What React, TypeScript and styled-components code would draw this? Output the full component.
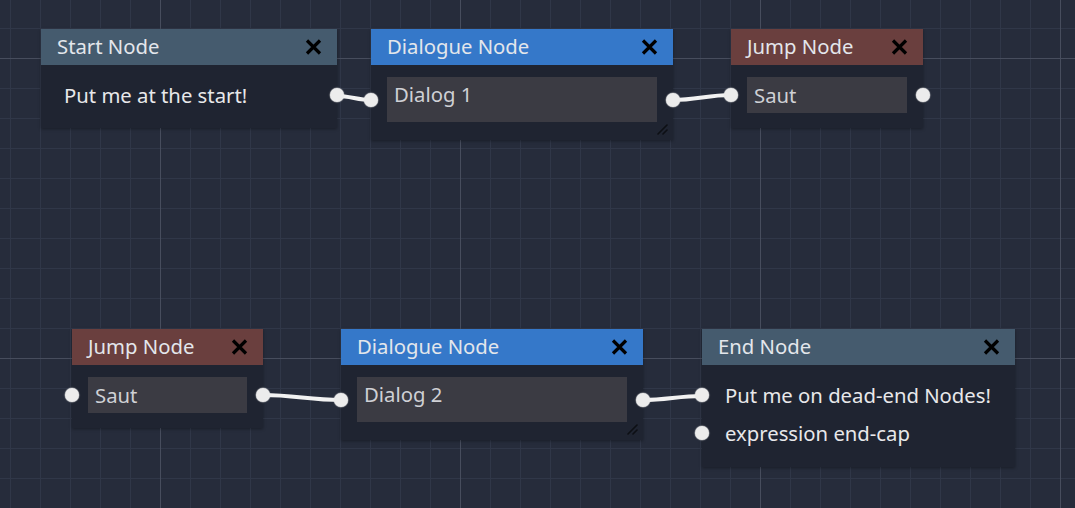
import React from "react";
import styled, { createGlobalStyle } from "styled-components";

const Global = createGlobalStyle`
  html, body { margin: 0; padding: 0; background: #262c3b; overflow: hidden; }
  * { box-sizing: border-box; }
`;

const Canvas = styled.div`
  position: relative;
  width: 1075px;
  height: 508px;
  overflow: hidden;
  font-family: "Noto Sans", "Open Sans", sans-serif;
  font-size: 20.3px;
  background-color: #262c3b;
  background-image:
    linear-gradient(to right, #474d5d 1px, transparent 1px),
    linear-gradient(to bottom, #474d5d 1px, transparent 1px),
    linear-gradient(to right, #303748 1px, transparent 1px),
    linear-gradient(to bottom, #303748 1px, transparent 1px);
  background-size: 300px 300px, 300px 300px, 30px 30px, 30px 30px;
  background-position: 160px 58px, 160px 58px, 10px 28px, 10px 28px;
`;

const Wires = styled.svg`
  position: absolute;
  inset: 0;
  width: 1075px;
  height: 508px;
  pointer-events: none;
`;

const GraphNode = styled.div<{ $x: number; $y: number; $w: number }>`
  position: absolute;
  left: ${(p) => p.$x}px;
  top: ${(p) => p.$y}px;
  width: ${(p) => p.$w}px;
  background: #1f2431;
  box-shadow: 0 1px 3px rgba(0, 0, 0, 0.35);
`;

const TitleBar = styled.div<{ $color: string }>`
  display: flex;
  align-items: center;
  justify-content: space-between;
  height: 36px;
  padding: 0 15px 2px 16px;
  background: ${(p) => p.$color};
  color: #e3e6eb;
  line-height: 27px;
`;

const CloseButton = styled.svg`
  width: 17px;
  height: 16px;
  display: block;
  margin-top: 2px;
`;

const Body = styled.div<{ $pb: number }>`
  display: flex;
  flex-direction: column;
  gap: 2px;
  padding: 12px 16px ${(p) => p.$pb}px;
`;

const Slot = styled.div`
  position: relative;
  display: flex;
  align-items: stretch;
  min-height: 36px;
`;

const Port = styled.span<{ $side: "left" | "right" }>`
  position: absolute;
  top: 50%;
  ${(p) => p.$side}: -23px;
  width: 14px;
  height: 14px;
  margin-top: -7px;
  border-radius: 50%;
  background: #ececec;
  box-shadow: 0 0 1px 0.5px rgba(236, 236, 236, 0.6);
`;

const Label = styled.div`
  display: flex;
  align-items: center;
  padding-left: 7px;
  color: #e8e8ea;
  line-height: 27px;
  white-space: nowrap;
`;

const LineEdit = styled.div`
  flex: 1;
  display: flex;
  align-items: center;
  height: 36px;
  padding-left: 7px;
  background: #3b3b43;
  color: #cfd0d5;
  line-height: 27px;
`;

const TextEdit = styled.div`
  flex: 1;
  height: 45px;
  padding: 4px 0 0 7px;
  background: #3b3b43;
  color: #cfd0d5;
  line-height: 27px;
`;

const Grip = styled.svg`
  position: absolute;
  right: 5px;
  bottom: 5px;
  width: 11px;
  height: 11px;
`;

const Close = () => (
  <CloseButton viewBox="0 0 17 16">
    <path d="M2 1.5 L15 14.5 M15 1.5 L2 14.5" stroke="#000" strokeWidth="3.2" />
  </CloseButton>
);

const ResizeGrip = () => (
  <Grip viewBox="0 0 11 11">
    <path d="M1 10 L10 1 M6 10 L10 6" stroke="#0d0f14" strokeWidth="1.6" strokeLinecap="round" />
  </Grip>
);

type Row = { kind: "label" | "line" | "text"; text: string; left?: boolean; right?: boolean };

type NodeDef = {
  title: string;
  color: string;
  x: number;
  y: number;
  w: number;
  pb: number;
  resizable?: boolean;
  rows: Row[];
};

const START = "#455b6e";
const DIALOGUE = "#3578c9";
const JUMP = "#6a3f3e";

const nodes: NodeDef[] = [
  { title: "Start Node", color: START, x: 41, y: 29, w: 296, pb: 15, rows: [{ kind: "label", text: "Put me at the start!", right: true }] },
  { title: "Dialogue Node", color: DIALOGUE, x: 371, y: 29, w: 302, pb: 18, resizable: true, rows: [{ kind: "text", text: "Dialog 1", left: true, right: true }] },
  { title: "Jump Node", color: JUMP, x: 731, y: 29, w: 192, pb: 15, rows: [{ kind: "line", text: "Saut", left: true, right: true }] },
  { title: "Jump Node", color: JUMP, x: 72, y: 329, w: 191, pb: 15, rows: [{ kind: "line", text: "Saut", left: true, right: true }] },
  { title: "Dialogue Node", color: DIALOGUE, x: 341, y: 329, w: 302, pb: 18, resizable: true, rows: [{ kind: "text", text: "Dialog 2", left: true, right: true }] },
  {
    title: "End Node",
    color: START,
    x: 702,
    y: 329,
    w: 313,
    pb: 16,
    rows: [
      { kind: "label", text: "Put me on dead-end Nodes!", left: true },
      { kind: "label", text: "expression end-cap", left: true },
    ],
  },
];

const wires: [number, number, number, number][] = [
  [337, 96, 371, 100],
  [673, 100, 731, 95],
  [263, 395, 341, 400],
  [643, 400, 702, 396],
];

const wirePath = ([x1, y1, x2, y2]: [number, number, number, number]) => {
  const d = (x2 - x1) * 0.4;
  return `M${x1} ${y1} C${x1 + d} ${y1} ${x2 - d} ${y2} ${x2} ${y2}`;
};

const RowView = ({ row }: { row: Row }) => (
  <Slot>
    {row.left && <Port $side="left" />}
    {row.kind === "label" && <Label>{row.text}</Label>}
    {row.kind === "line" && <LineEdit>{row.text}</LineEdit>}
    {row.kind === "text" && <TextEdit>{row.text}</TextEdit>}
    {row.right && <Port $side="right" />}
  </Slot>
);

export default function App() {
  return (
    <>
      <Global />
      <Canvas>
        <Wires viewBox="0 0 1075 508">
          {wires.map((w, i) => (
            <path key={i} d={wirePath(w)} stroke="#f2f2f2" strokeWidth="4" fill="none" strokeLinecap="round" />
          ))}
        </Wires>
        {nodes.map((n, i) => (
          <GraphNode key={i} $x={n.x} $y={n.y} $w={n.w}>
            <TitleBar $color={n.color}>
              <span>{n.title}</span>
              <Close />
            </TitleBar>
            <Body $pb={n.pb}>
              {n.rows.map((r, j) => (
                <RowView key={j} row={r} />
              ))}
            </Body>
            {n.resizable && <ResizeGrip />}
          </GraphNode>
        ))}
      </Canvas>
    </>
  );
}
